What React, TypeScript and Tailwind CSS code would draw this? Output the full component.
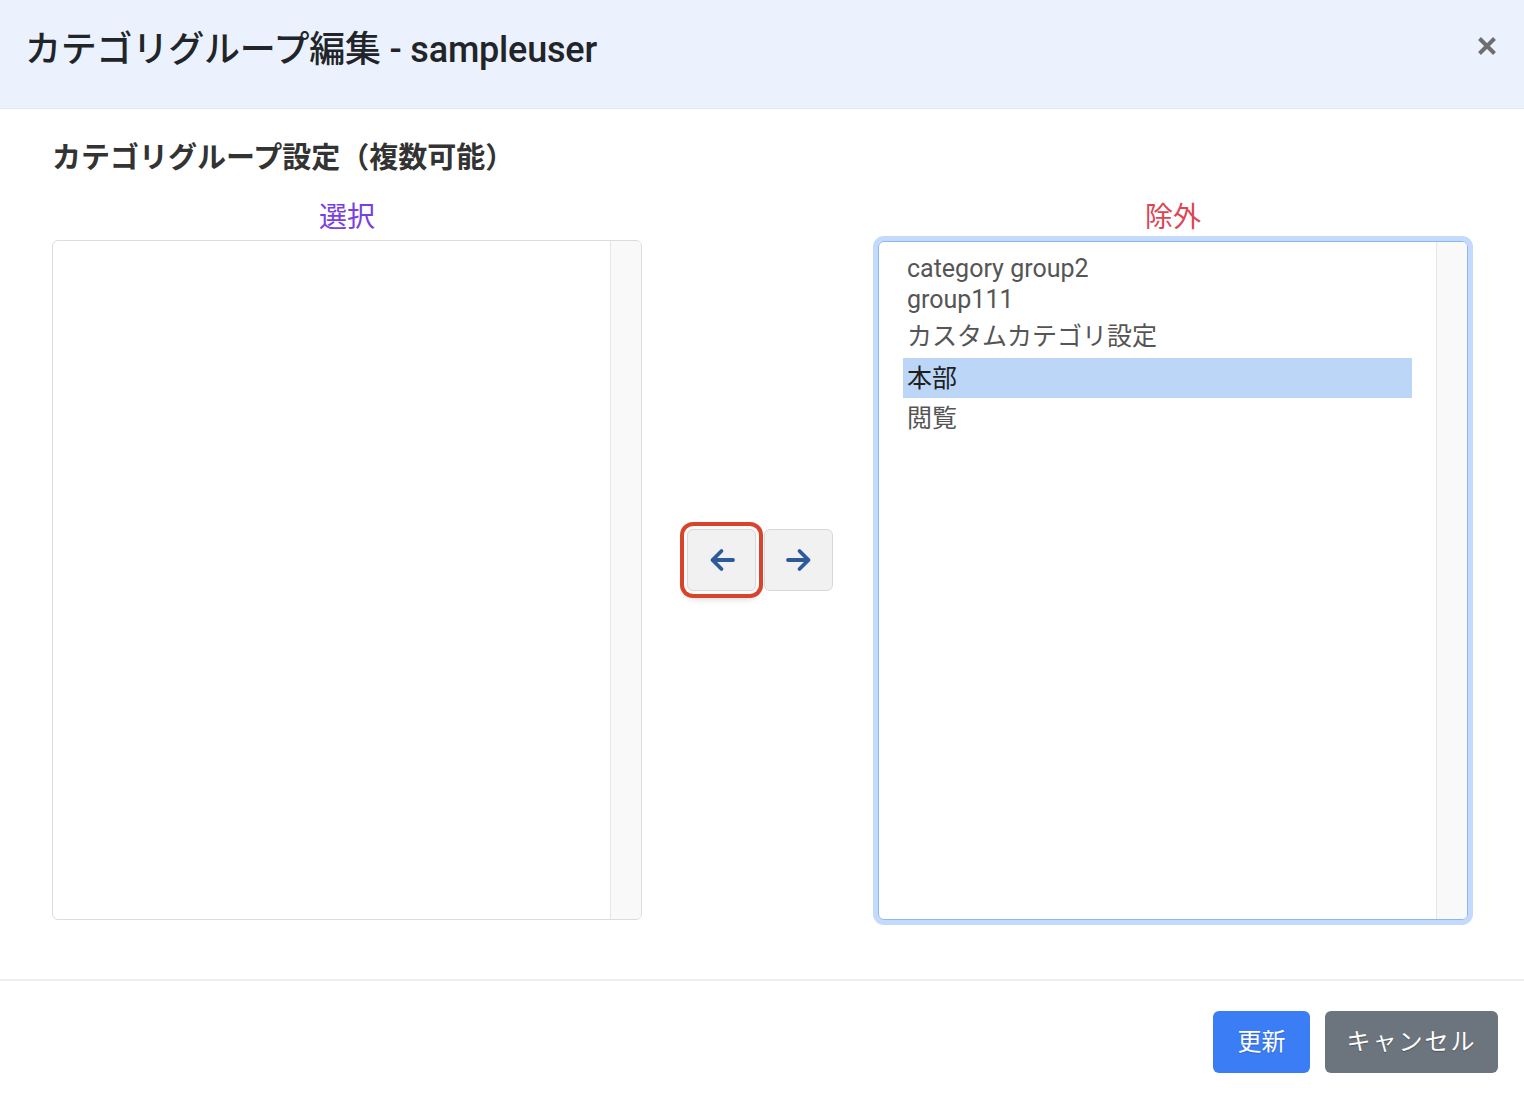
import React, { useState } from "react";

const font = "font-['Roboto','Noto_Sans_CJK_JP',sans-serif]";

const excluded = [
  { label: "category group2", h: "h-[31px]" },
  { label: "group111", h: "h-[31px]" },
  { label: "カスタムカテゴリ設定", h: "h-[43px]" },
  { label: "本部", h: "h-[40px]" },
  { label: "閲覧", h: "h-[40px]" },
];

function ArrowIcon({ dir }: { dir: "left" | "right" }) {
  return (
    <svg width="26" height="24" viewBox="0 0 26 24" fill="none" className={dir === "right" ? "rotate-180" : ""}>
      <path d="M24 12H4" stroke="#2c5a9c" strokeWidth="3.8" strokeLinecap="round" />
      <path d="M12.5 3L3.5 12L12.5 21" stroke="#2c5a9c" strokeWidth="3.8" strokeLinecap="round" strokeLinejoin="round" />
    </svg>
  );
}

export default function App() {
  const [selected, setSelected] = useState("本部");

  return (
    <div className={`w-[1524px] h-[1098px] bg-white flex flex-col ${font}`}>
      {/* header */}
      <div className="h-[109px] shrink-0 bg-[#ebf2fd] border-b border-[#e3e8ef] flex items-center justify-between pl-[25px] pr-[27px]">
        <h1 className="text-[36px] font-medium text-[#212529] tracking-[-0.2px] pb-[8px]">
          カテゴリグループ編集 - sampleuser
        </h1>
        <button className="pb-[16px]">
          <svg width="20" height="20" viewBox="0 0 20 20">
            <path d="M2.5 2.5L17.5 17.5M17.5 2.5L2.5 17.5" stroke="#6e6e6e" strokeWidth="4" />
          </svg>
        </button>
      </div>

      {/* body */}
      <div className="flex-1 pl-[52px] pr-[56px] pt-[31px]">
        <h2 className="text-[29px] leading-[36px] font-bold text-[#333]">
          カテゴリグループ設定（複数可能）
        </h2>

        <div className="flex mt-[24px]">
          {/* left column */}
          <div className="w-[590px] flex flex-col">
            <div className="h-[32px] pt-[4px] flex items-center justify-center text-[28px] text-[#7a3fe3] leading-none">
              選択
            </div>
            <div className="mt-[8px] h-[680px] border border-[#d9dce1] rounded-[6px] flex overflow-hidden">
              <div className="flex-1" />
              <div className="w-[31px] bg-[#f9f9f9] border-l border-[#e6e6e6]" />
            </div>
          </div>

          {/* middle */}
          <div className="w-[236px] flex items-center justify-center gap-[8px]">
            <button className="w-[69px] h-[62px] rounded-[6px] bg-[#f1f1f1] border border-[#d8d8d8] flex items-center justify-center ring-4 ring-[#d8432c] ring-offset-[3px] ring-offset-[#fafafa] shadow-[0_6px_8px_rgba(0,0,0,0.25)]">
              <ArrowIcon dir="left" />
            </button>
            <button className="w-[69px] h-[62px] rounded-[6px] bg-[#f1f1f1] border border-[#d8d8d8] flex items-center justify-center">
              <ArrowIcon dir="right" />
            </button>
          </div>

          {/* right column */}
          <div className="w-[590px] flex flex-col">
            <div className="h-[32px] pt-[4px] flex items-center justify-center text-[28px] text-[#da4653] leading-none">
              除外
            </div>
            <div className="mt-[9px] h-[679px] border border-[#8cb4f6] rounded-[6px] flex overflow-hidden ring-[5px] ring-[#c4dafb]">
              <div className="flex-1 pt-[11px] pl-[24px] pr-[24px]">
                {excluded.map((it) => (
                  <div
                    key={it.label}
                    onClick={() => setSelected(it.label)}
                    className={`${it.h} flex items-center px-[4px] text-[25px] leading-none cursor-default ${
                      selected === it.label ? "bg-[#bcd6f8] text-[#1f1f1f]" : "text-[#555]"
                    }`}
                  >
                    {it.label}
                  </div>
                ))}
              </div>
              <div className="w-[31px] bg-[#f9f9f9] border-l border-[#e6e6e6]" />
            </div>
          </div>
        </div>
      </div>

      {/* footer */}
      <div className="h-[119px] shrink-0 border-t-2 border-[#efefef] flex items-start justify-end gap-[15px] pr-[26px] pt-[30px]">
        <button className="w-[97px] h-[62px] rounded-[6px] bg-[#3a7df5] text-white text-[24px] [text-shadow:0_1px_1px_rgba(0,0,0,0.2)]">
          更新
        </button>
        <button className="w-[173px] h-[62px] rounded-[6px] bg-[#6c757d] text-white text-[24px] tracking-[2px] [text-shadow:0_1px_1px_rgba(0,0,0,0.3)]">
          キャンセル
        </button>
      </div>
    </div>
  );
}
